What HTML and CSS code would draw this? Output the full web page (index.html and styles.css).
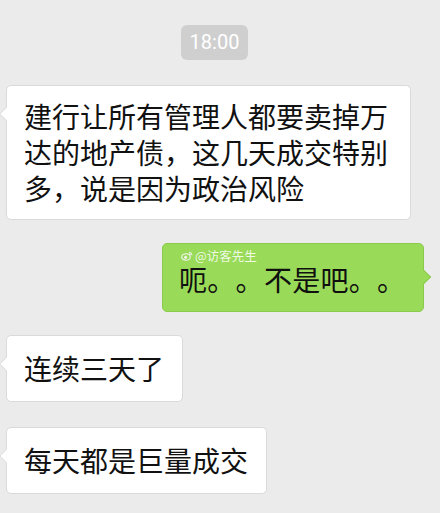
FILE: index.html
```html
<html>
    <head>
        <title>
            聊天记录
        </title>
        <meta charset="utf-8">
        <link rel="stylesheet" href="styles.css">
    </head>
    <body>
        <div class="chat">
            <div class="time">18:00</div>

            <div class="msg left">
                <div class="bubble wide">建行让所有管理人都要卖掉万达的地产债，这几天成交特别多，说是因为政治风险</div>
            </div>

            <div class="msg right">
                <div class="bubble green">
                    <span class="mark">
                        <svg width="12" height="10" viewBox="0 0 12 10">
                            <ellipse cx="5" cy="6" rx="4.3" ry="3.2" fill="none" stroke="#f4f4f4" stroke-width="1.1"/>
                            <circle cx="4.6" cy="6.3" r="1.5" fill="#f4f4f4"/>
                            <path d="M8 1.2 A3 3 0 0 1 11 4.2" fill="none" stroke="#f4f4f4" stroke-width="1"/>
                            <path d="M8 2.8 A1.5 1.5 0 0 1 9.5 4.3" fill="none" stroke="#f4f4f4" stroke-width="1"/>
                        </svg>
                        @访客先生
                    </span>
                    <span class="text">呃。。不是吧。。</span>
                </div>
            </div>

            <div class="msg left">
                <div class="bubble">连续三天了</div>
            </div>

            <div class="msg left last">
                <div class="bubble">每天都是巨量成交</div>
            </div>
        </div>
    </body>
</html>
```

FILE: styles.css
```css
body{
    margin: 0;
    background-color: #ebebeb;
    font-family: "Noto Sans CJK SC", "Noto Sans", sans-serif;
    text-spacing-trim: space-all;
}
.chat{
    display: flex;
    flex-direction: column;
    padding: 25px 16px 0 6px;
}
.time{
    align-self: flex-start;
    margin-left: 175px;
    width: 67px;
    height: 35px;
    line-height: 35px;
    text-align: center;
    background-color: #cfcfcf;
    color: #ffffff;
    font-family: Roboto, "Liberation Sans", sans-serif;
    font-size: 20px;
    border-radius: 6px;
}
.msg{
    display: flex;
    margin-top: 23px;
}
.msg.left{
    justify-content: flex-start;
}
.msg.right{
    justify-content: flex-end;
}
.time + .msg{
    margin-top: 25px;
}
.msg.last{
    margin-top: 25px;
}
.bubble{
    position: relative;
    max-width: 405px;
    box-sizing: border-box;
    padding: 14px 18px 15px 17px;
    background-color: #ffffff;
    border: 1px solid #dadada;
    border-radius: 5px;
    color: #111111;
    font-size: 28px;
    line-height: 36px;
}
.bubble.wide{
    padding: 12px 18px 13px 17px;
}
.bubble::before{
    content: "";
    position: absolute;
    left: -6px;
    top: 23px;
    width: 9px;
    height: 9px;
    background-color: #ffffff;
    border-left: 1px solid #dadada;
    border-bottom: 1px solid #dadada;
    transform: rotate(45deg);
}
.bubble.green{
    width: 262px;
    padding: 18px 0 15px 16px;
    background-color: #99db58;
    border-color: #8acb4e;
    color: #101010;
    line-height: 34px;
    white-space: nowrap;
}
.bubble.green::before{
    left: auto;
    right: -6px;
    top: 28px;
    background-color: #99db58;
    border: none;
    border-top: 1px solid #8acb4e;
    border-right: 1px solid #8acb4e;
}
.text{
    letter-spacing: 0.3px;
}
.mark{
    position: absolute;
    left: 18px;
    top: 5px;
    display: flex;
    align-items: center;
    gap: 2px;
    color: rgba(255, 255, 255, 0.85);
    font-size: 12.5px;
    line-height: 13px;
}
```
